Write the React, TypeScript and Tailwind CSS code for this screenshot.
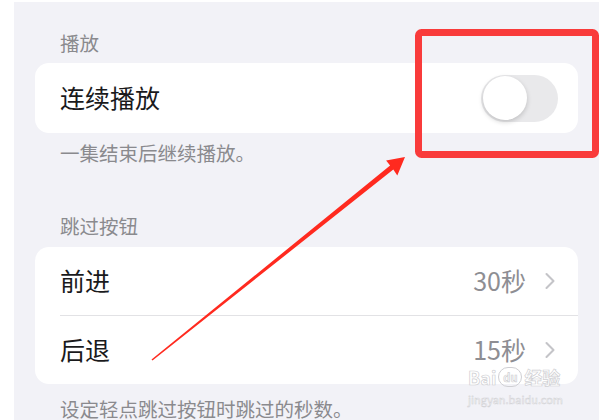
import { ChevronRight } from 'lucide-react';

const font = { fontFamily: '"Noto Sans CJK SC", "Noto Sans", sans-serif' };

function SectionLabel({ children }: { children: string }) {
  return <div className="pl-[25px] text-[19.5px] leading-6 text-[#8a8a8e]">{children}</div>;
}

function ValueRow({ title, value }: { title: string; value: string }) {
  return (
    <div className="flex h-[68px] items-center justify-between pl-[25px] pr-[14px]">
      <span className="text-[25px] text-[#1a1a1c]">{title}</span>
      <div className="flex items-center gap-[10px]">
        <span className="text-[25px] text-[#8e8e93]">{value}</span>
        <ChevronRight className="h-[28px] w-[28px] text-[#c4c4c8]" strokeWidth={1.8} />
      </div>
    </div>
  );
}

export default function App() {
  return (
    <div className="relative h-[420px] w-[613px] overflow-hidden bg-white" style={font}>
      <div className="ml-[14px] mt-[2px] h-[418px] w-[585px] bg-[#f2f2f7] px-[21px] pt-[29px]">
        {/* 播放 */}
        <SectionLabel>播放</SectionLabel>
        <div className="mt-[8px] flex h-[70px] items-center justify-between rounded-[14px] bg-white pl-[25px] pr-[20px]">
          <span className="text-[25px] text-[#1a1a1c]">连续播放</span>
          <div className="flex h-[47px] w-[77px] items-center rounded-full bg-[#e9e9eb] px-[1.5px]">
            <div className="h-[44px] w-[44px] rounded-full bg-white shadow-[0_2px_5px_rgba(0,0,0,0.18)]" />
          </div>
        </div>
        <div className="mt-[8px] pl-[25px] text-[19.5px] leading-6 text-[#8a8a8e]">一集结束后继续播放。</div>

        {/* 跳过按钮 */}
        <div className="mt-[49px]">
          <SectionLabel>跳过按钮</SectionLabel>
        </div>
        <div className="mt-[9px] rounded-[14px] bg-white">
          <ValueRow title="前进" value="30秒" />
          <div className="ml-[25px] h-px bg-[#e2e2e5]" />
          <ValueRow title="后退" value="15秒" />
        </div>
        <div className="mt-[13px] pl-[25px] text-[19.5px] leading-6 text-[#8a8a8e]">设定轻点跳过按钮时跳过的秒数。</div>
      </div>

      {/* annotation */}
      <svg className="pointer-events-none absolute left-0 top-0" width="613" height="420" viewBox="0 0 613 420">
        <rect x="418.5" y="32.5" width="177" height="122" rx="3" fill="none" stroke="#f93b3b" strokeWidth="7" />
        <polygon
          points="152.5,360.6 393.3,169.6 397.3,175.6 405,157 386.1,160.6 390.1,165.6 151.5,359.4"
          fill="#ff2a1f"
        />
      </svg>

      {/* watermark */}
      <div className="pointer-events-none absolute left-[468px] top-[367px] flex flex-col items-start">
        <div className="flex items-center gap-[2px] text-[18px] font-bold leading-5 text-white [-webkit-text-stroke:0.7px_#cfcfd3]">
          <span>Bai</span>
          <span className="flex h-[20px] w-[24px] items-center justify-center rounded-full border border-[#cfcfd3] text-[11px] leading-none">
            du
          </span>
          <span>经验</span>
        </div>
        <div className="mt-[6px] text-[11px] leading-3 text-white [-webkit-text-stroke:0.5px_#d0d0d4]">jingyan.baidu.com</div>
      </div>
    </div>
  );
}
